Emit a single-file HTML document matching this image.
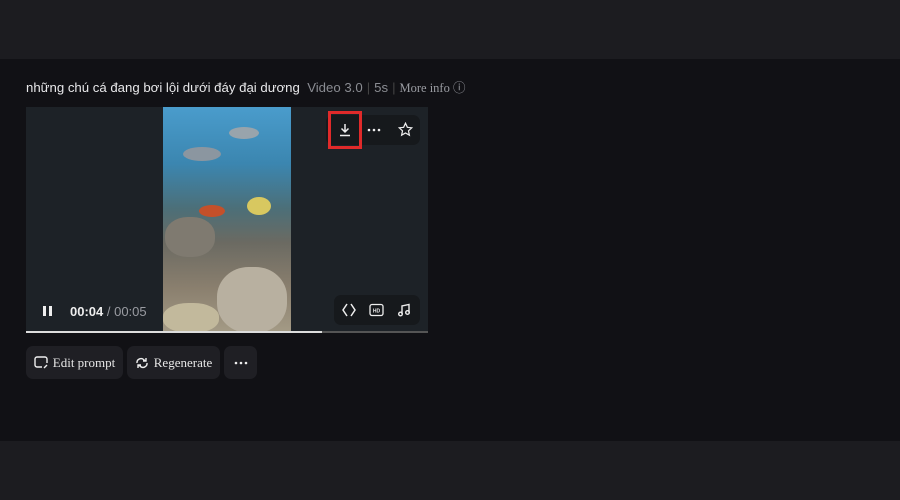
<!DOCTYPE html>
<html><head><style>
body{margin:0;width:900px;height:500px;background:#1c1c20;font-family:"Liberation Sans",sans-serif;position:relative;overflow:hidden}
.main{position:absolute;left:0;top:59px;width:900px;height:382px;background:#111115}
.title{position:absolute;left:26px;top:77px;font-size:13.2px;color:#e8e8ea;white-space:nowrap}
.title .g{color:#8a8c92}
.title .s{color:#444;margin:0 4px}
.title .m{font-family:"Liberation Serif",serif;font-size:12.5px;color:#9a9ca2}
.video{position:absolute;left:26px;top:107px;width:402px;height:226px;background:#1d2227}
.img{position:absolute;left:137px;top:0;width:128px;height:226px;overflow:hidden;background:linear-gradient(180deg,#4a9ccc 0%,#3b86b0 25%,#4c6f78 45%,#6b6a62 60%,#8a7f6e 80%,#a49b86 100%)}
.bar{position:absolute;left:0;top:224px;width:402px;height:2px;background:#555}
.bar i{position:absolute;left:0;top:0;width:296px;height:2px;background:#ddd}
.tb{position:absolute;background:#16191c;border-radius:7px}
.btn{position:absolute;top:346px;height:33px;background:#1f1f24;border-radius:7px;color:#e6e6e6;font-family:"Liberation Serif",serif;font-size:13px;display:flex;align-items:center;justify-content:center;gap:5px}
</style></head><body>
<div class="main"></div>
<div class="title">những chú cá đang bơi lội dưới đáy đại dương <span class="g">&nbsp;Video 3.0</span><span class="s">|</span><span class="g">5s</span><span class="s">|</span><span class="m">More info ⓘ</span></div>
<div class="video">
 <div class="img">
  <div style="position:absolute;left:20px;top:40px;width:38px;height:14px;background:#8b96a0;border-radius:50%"></div>
  <div style="position:absolute;left:66px;top:20px;width:30px;height:12px;background:#98a4ac;border-radius:50%"></div>
  <div style="position:absolute;left:36px;top:98px;width:26px;height:12px;background:#c4502a;border-radius:50%"></div>
  <div style="position:absolute;left:84px;top:90px;width:24px;height:18px;background:#d8c860;border-radius:50%"></div>
  <div style="position:absolute;left:54px;top:160px;width:70px;height:66px;background:#b8b0a0;border-radius:45%"></div>
  <div style="position:absolute;left:2px;top:110px;width:50px;height:40px;background:#7f7a70;border-radius:45%"></div>
  <div style="position:absolute;left:0;top:196px;width:56px;height:30px;background:#c2b99c;border-radius:45%"></div>
 </div>
 <div class="tb" style="left:300px;top:8px;width:94px;height:30px"></div>
 <div style="position:absolute;left:302px;top:4px;width:34px;height:38px;border:3px solid #e02a2a;box-sizing:border-box"></div>
 <svg style="position:absolute;left:312px;top:16px" width="14" height="14" viewBox="0 0 14 14" fill="none" stroke="#eee" stroke-width="1.5"><path d="M7 1v8M3.5 5.5 7 9l3.5-3.5M2 12.5h10"/></svg>
 <svg style="position:absolute;left:341px;top:21px" width="14" height="4" viewBox="0 0 14 4" fill="#eee"><circle cx="2" cy="2" r="1.3"/><circle cx="7" cy="2" r="1.3"/><circle cx="12" cy="2" r="1.3"/></svg>
 <svg style="position:absolute;left:372px;top:15px" width="15" height="15" viewBox="0 0 24 24" fill="none" stroke="#eee" stroke-width="2"><path d="M12 2l3 6.5 7 .8-5.2 4.8 1.4 7L12 17.6 5.8 21.1l1.4-7L2 9.3l7-.8z"/></svg>
 <div class="tb" style="left:308px;top:188px;width:86px;height:30px"></div>
 <svg style="position:absolute;left:316px;top:196px" width="14" height="14" viewBox="0 0 14 14" fill="none" stroke="#eee" stroke-width="1.5"><path d="M5 1 1 7l4 6M9 1l4 6-4 6"/></svg>
 <svg style="position:absolute;left:343px;top:196px" width="15" height="14" viewBox="0 0 15 14" fill="none" stroke="#eee" stroke-width="1.3"><rect x="1" y="1.5" width="13" height="11" rx="2"/><text x="7.5" y="9.3" font-size="5" fill="#eee" stroke="none" text-anchor="middle" font-family="Liberation Sans" font-weight="bold">HD</text></svg>
 <svg style="position:absolute;left:371px;top:196px" width="14" height="14" viewBox="0 0 14 14" fill="none" stroke="#eee" stroke-width="1.4"><path d="M5 11V3l7-1.5v8"/><circle cx="3.5" cy="11" r="1.8"/><circle cx="10.5" cy="9.5" r="1.8"/></svg>
 <div style="position:absolute;left:17px;top:199px;width:3px;height:10px;background:#eee"></div>
 <div style="position:absolute;left:23px;top:199px;width:3px;height:10px;background:#eee"></div>
 <div style="position:absolute;left:44px;top:197px;font-size:13px;font-weight:bold;color:#eee">00:04<span style="color:#9a9ca2;font-weight:normal"> / 00:05</span></div>
 <div class="bar"><i></i></div>
</div>
<div class="btn" style="left:26px;width:97px"><svg width="14" height="13" viewBox="0 0 14 13" fill="none" stroke="#eee" stroke-width="1.4"><path d="M8 11H3a2 2 0 0 1-2-2V3a2 2 0 0 1 2-2h8a2 2 0 0 1 2 2v4"/><path d="M10 12l3-3"/></svg>Edit prompt</div>
<div class="btn" style="left:127px;width:93px"><svg width="14" height="12" viewBox="0 0 14 12" fill="none" stroke="#eee" stroke-width="1.4"><path d="M2 6a4 4 0 0 1 7-3l2 1M12 6a4 4 0 0 1-7 3L3 8M11 1v3H8M3 11V8h3"/></svg>Regenerate</div>
<div class="btn" style="left:224px;width:33px"><svg width="14" height="4" viewBox="0 0 14 4" fill="#eee"><circle cx="2" cy="2" r="1.3"/><circle cx="7" cy="2" r="1.3"/><circle cx="12" cy="2" r="1.3"/></svg></div>
</body></html>
